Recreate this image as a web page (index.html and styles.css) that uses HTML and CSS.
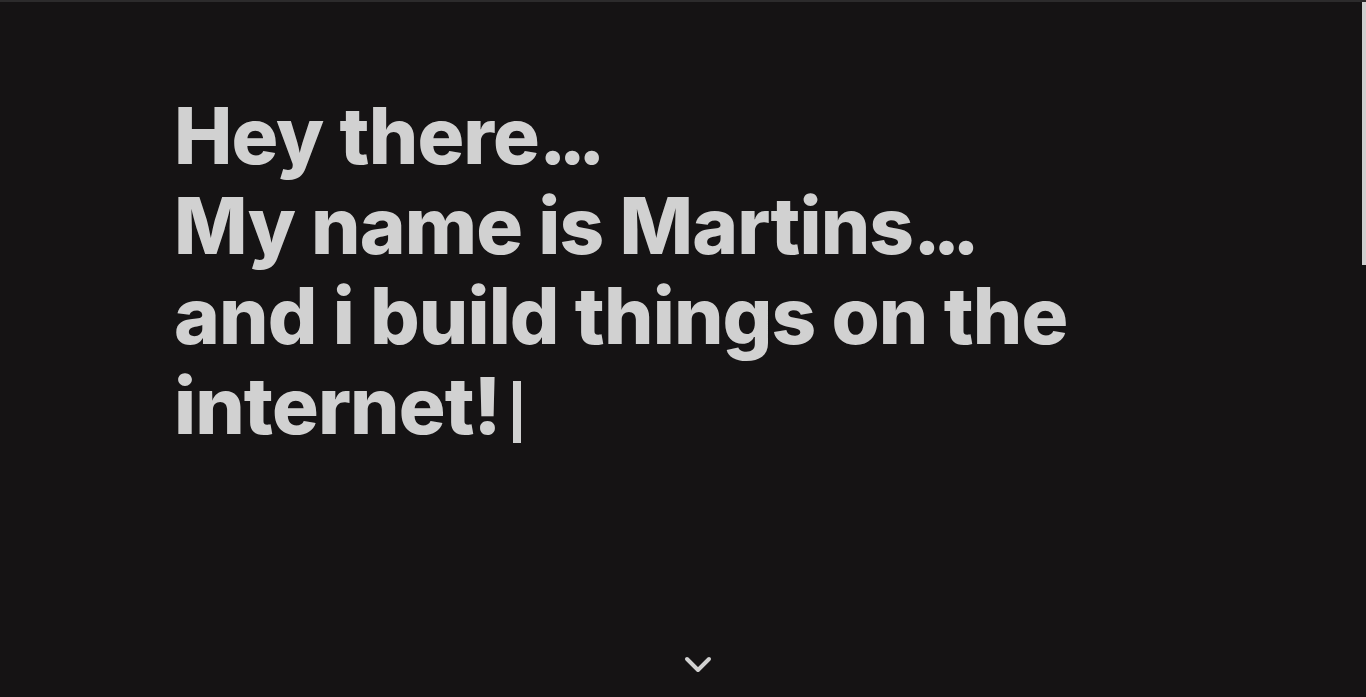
FILE: index.html
```html
<!DOCTYPE html>
<html lang="en">
<head>
<meta charset="utf-8">
<title>Martins</title>
<link rel="stylesheet" href="styles.css">
</head>
<body>
<div class="topline"></div>
<div class="scroll-thumb"></div>
<section class="hero">
  <h1 class="intro">
    <span class="line">Hey there<span class="dots">...</span></span>
    <span class="line">My name is Martins<span class="dots">...</span></span>
    <span class="line">and i build things on the internet!<span class="cursor"></span></span>
  </h1>
  <a class="down" href="#about" aria-label="Scroll down">
    <svg width="28" height="18" viewBox="0 0 28 18" fill="none" stroke="#d1d1d1" stroke-width="4" stroke-linecap="round" stroke-linejoin="round"><path d="M3 3 L14 14 L25 3"/></svg>
  </a>
</section>
<section class="about" id="about"></section>
</body>
</html>
```
FILE: styles.css
```css
html, body {
  margin: 0;
  padding: 0;
  background: #151314;
}
::-webkit-scrollbar {
  width: 4px;
}
::-webkit-scrollbar-track {
  background: #151314;
}
::-webkit-scrollbar-thumb {
  background: #cfcfcf;
}
body {
  font-family: "Inter", "Liberation Sans", sans-serif;
  color: #d1d1d1;
}
.topline {
  position: fixed;
  top: 0;
  left: 0;
  right: 0;
  height: 2px;
  background: #2c2b2c;
  z-index: 5;
}
.scroll-thumb {
  position: fixed;
  top: 2px;
  right: 0;
  width: 4px;
  height: 263px;
  background: #cfcfcf;
  z-index: 6;
}
.hero {
  height: 697px;
  box-sizing: border-box;
  padding: 91px 0 0 174px;
  display: flex;
  flex-direction: column;
  position: relative;
}
.intro {
  margin: 0;
  font-size: 78px;
  font-weight: 800;
  line-height: 90px;
  max-width: 920px;
  letter-spacing: -0.9px;
}
.line {
  display: block;
}
.dots {
  letter-spacing: -8px;
}
.cursor {
  display: inline-block;
  width: 8px;
  height: 62px;
  background: #d1d1d1;
  margin-left: 12px;
  vertical-align: -9px;
}
.down {
  position: absolute;
  left: 684px;
  top: 656px;
  display: flex;
}
.about {
  height: 1150px;
}
```
